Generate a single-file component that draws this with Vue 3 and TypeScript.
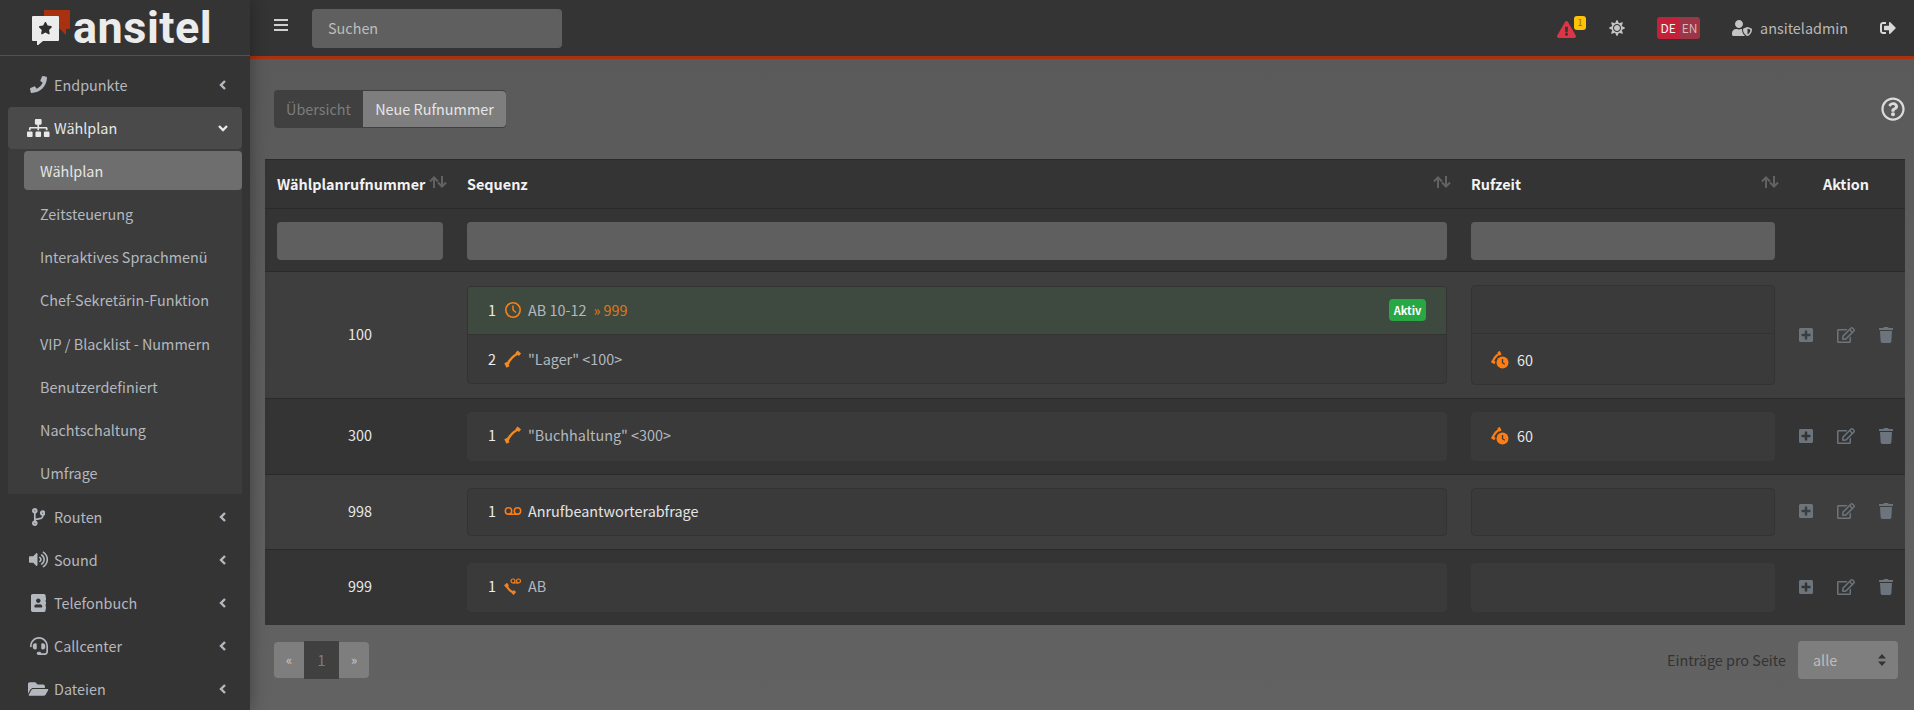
<template>
  <div class="page">
    <aside class="sidebar">
      <div class="brand">
        <svg class="brand-icon" viewBox="0 0 38 35" width="38" height="35">
          <path d="M12 0h25a1 1 0 0 1 1 1v17a1 1 0 0 1-1 1h-3v6l-6-6h-1V6H12z" fill="#a8320f" />
          <path d="M1 6h25a1 1 0 0 1 1 1v23a1 1 0 0 1-1 1H11l-6 5v-5H1a1 1 0 0 1-1-1V7a1 1 0 0 1 1-1z" fill="#ececec" />
          <path :d="icons.star.d" transform="translate(6.500 12) scale(.024)" fill="#2e2e2e" />
        </svg>
        <span class="brand-name">ansitel</span>
      </div>
      <nav class="menu">
        <template v-for="item in menu" :key="item.label">
          <a class="menu-item" :class="{ open: item.children }">
            <span class="menu-icon">
              <svg :viewBox="`0 0 ${icons[item.icon].w} 512`" :height="item.size" fill="currentColor"><path :d="icons[item.icon].d" /></svg>
            </span>
            <span class="menu-label">{{ item.label }}</span>
            <svg class="chevron" viewBox="0 0 10 10" width="10" height="10">
              <path :d="item.children ? 'M1 3l4 4 4-4' : 'M7 1L3 5l4 4'" fill="none" stroke="currentColor" stroke-width="2.4" />
            </svg>
          </a>
          <div v-if="item.children" class="submenu">
            <a v-for="(child, i) in item.children" :key="child" class="submenu-item" :class="{ active: i === 0 }">{{ child }}</a>
          </div>
        </template>
      </nav>
    </aside>

    <div class="main">
      <header class="topbar">
        <svg class="burger" viewBox="0 0 14 12" width="14" height="12"><path d="M0 0h14v2H0zM0 5h14v2H0zM0 10h14v2H0z" fill="#d0d0d0" /></svg>
        <input class="search" placeholder="Suchen" />
        <div class="top-right">
          <span class="alert">
            <svg viewBox="0 0 576 512" width="19" height="17" fill="#dc3545"><path :d="icons.warning.d" /></svg>
            <span class="alert-badge">1</span>
          </span>
          <svg class="sun" viewBox="0 0 512 512" width="16" height="16" fill="#c4c4c4"><path :d="icons.sun.d" /></svg>
          <span class="lang"><span class="lang-on">DE</span><span class="lang-off">EN</span></span>
          <svg class="user-icon" viewBox="0 0 640 512" width="20" height="16" fill="#c4c4c4"><path :d="icons.user.d" /></svg>
          <span class="username">ansiteladmin</span>
          <svg class="logout" viewBox="0 0 512 512" width="16" height="16" fill="#d8d8d8"><path :d="icons.logout.d" /></svg>
        </div>
      </header>

      <main class="content">
        <div class="tabs-row">
          <div class="tabs">
            <span class="tab">Übersicht</span>
            <span class="tab tab-active">Neue Rufnummer</span>
          </div>
          <svg viewBox="0 0 512 512" width="24" height="24" fill="#dcdcdc"><path :d="icons.help.d" /></svg>
        </div>

        <table class="plan">
          <colgroup>
            <col style="width: 190px" />
            <col />
            <col style="width: 328px" />
            <col style="width: 118px" />
          </colgroup>
          <thead>
            <tr class="head">
              <th v-for="h in ['Wählplanrufnummer', 'Sequenz', 'Rufzeit']" :key="h">
                <div class="th-inner">
                  <span>{{ h }}</span>
                  <svg viewBox="0 0 18 12" width="18" height="12" fill="none" stroke="#626262" stroke-width="2">
                    <path d="M5 12V2M1 5.500L5 1.500l4 4M13 0v10M9 6.500l4 4 4-4" />
                  </svg>
                </div>
              </th>
              <th class="th-action">Aktion</th>
            </tr>
            <tr class="filters">
              <td v-for="n in 3" :key="n"><input class="filter" /></td>
              <td></td>
            </tr>
          </thead>
          <tbody>
            <tr v-for="(row, r) in rows" :key="row.number" class="row" :class="{ odd: r % 2 === 0 }">
              <td class="number">{{ row.number }}</td>
              <td>
                <div class="box">
                  <div v-for="(s, i) in row.steps" :key="i" class="step" :class="{ green: s.active }">
                    <span class="step-no">{{ i + 1 }}</span>
                    <svg class="step-icon" viewBox="0 0 18 18" width="18" height="18" fill="none" stroke="#fd7e14">
                      <template v-if="s.kind === 'time'">
                        <circle cx="9" cy="9" r="7.200" stroke-width="1.600" />
                        <path d="M9 4.500V9l3 2.500" stroke-width="1.500" />
                      </template>
                      <template v-else-if="s.kind === 'phone'">
                        <path d="M3.500 14.500Q6 8 13.500 3.500" stroke="#f08a24" stroke-width="2.600" />
                        <path d="M1.800 12.500l2.200 4.500M12.500 1.800l3.500 3" stroke="#f08a24" stroke-width="3.400" />
                      </template>
                      <template v-else-if="s.kind === 'mail'">
                        <circle cx="4.500" cy="9" r="3.200" stroke-width="1.500" />
                        <circle cx="13.500" cy="9" r="3.200" stroke-width="1.500" />
                        <path d="M4.500 12.200h9" stroke-width="1.500" />
                      </template>
                      <template v-else>
                        <path d="M2.500 8.500c1.500 3.500 4 6 7.500 7" stroke-width="2.400" />
                        <path d="M1 9.500l3-2.500M8.500 17l2.500-3" stroke-width="3" />
                        <circle cx="9" cy="4" r="2" stroke-width="1.200" />
                        <circle cx="14.500" cy="4" r="2" stroke-width="1.200" />
                        <path d="M9 6h5.500" stroke-width="1.200" />
                      </template>
                    </svg>
                    <span class="step-text" :class="{ bright: s.kind === 'mail' }">{{ s.text }}</span>
                    <span v-if="s.target" class="step-target">» {{ s.target }}</span>
                    <span v-if="s.active" class="badge">Aktiv</span>
                  </div>
                </div>
              </td>
              <td>
                <div class="box">
                  <div v-for="(t, i) in row.times" :key="i" class="step time">
                    <template v-if="t">
                      <svg class="ring-icon" viewBox="0 0 18 18" width="18" height="18">
                        <path d="M2 10C3.500 6.500 5.500 4 9 2.500" fill="none" stroke="#fd7e14" stroke-width="2.200" />
                        <path d="M.5 10l3.500 2M7.500 .5l2 3.500" fill="none" stroke="#fd7e14" stroke-width="2.600" />
                        <circle cx="11.500" cy="11.500" r="6" fill="#fd7e14" />
                        <path d="M11.500 8v3.700l2.300 1.500" fill="none" stroke="#3a3a3a" stroke-width="1.300" />
                      </svg>
                      <span>{{ t }}</span>
                    </template>
                  </div>
                </div>
              </td>
              <td>
                <div class="actions">
                  <svg viewBox="0 0 448 512" width="14" height="16" fill="#6c757d"><path :d="icons.plus.d" /></svg>
                  <svg viewBox="0 0 576 512" width="18" height="16" fill="#6c757d"><path :d="icons.edit.d" /></svg>
                  <svg viewBox="0 0 448 512" width="14" height="16" fill="#6c757d"><path :d="icons.trash.d" /></svg>
                </div>
              </td>
            </tr>
          </tbody>
        </table>

        <div class="table-foot">
          <div class="pager">
            <span class="pg">«</span>
            <span class="pg pg-current">1</span>
            <span class="pg">»</span>
          </div>
          <div class="per-page">
            <label>Einträge pro Seite</label>
            <div class="select-wrap">
              <select class="select"><option>alle</option></select>
              <svg viewBox="0 0 8 12" width="8" height="12" fill="#333"><path d="M4 0l4 4.500H0zM4 12L0 7.500h8z" /></svg>
            </div>
          </div>
        </div>
      </main>
    </div>
  </div>
</template>

<script setup lang="ts">
interface Step {
  kind: 'time' | 'phone' | 'mail' | 'phonemail'
  text: string
  target?: string
  active?: boolean
}

// FontAwesome style icon paths, w = viewBox width
const icons: Record<string, { w: number; d: string }> = {
  phone: { w: 512, d: 'M493.4 24.6l-104-24c-11.300-2.600-22.900 3.300-27.500 13.900l-48 112c-4.200 9.800-1.400 21.300 6.900 28l60.600 49.600c-36 76.700-98.900 140.500-177.200 177.200l-49.600-60.600c-6.800-8.300-18.200-11.100-28-6.900l-112 48C3.900 366.500-2 378.100.6 389.400l24 104C27.100 504.200 36.700 512 48 512c256.100 0 464-207.500 464-464 0-11.200-7.700-20.900-18.600-23.400z' },
  sitemap: { w: 640, d: 'M128 352H32c-17.67 0-32 14.33-32 32v96c0 17.67 14.33 32 32 32h96c17.67 0 32-14.33 32-32v-96c0-17.67-14.33-32-32-32zm-24-80h192v48h48v-48h192v48h48v-57.59c0-21.17-17.23-38.41-38.41-38.41H344v-64h40c17.67 0 32-14.33 32-32V32c0-17.67-14.33-32-32-32H256c-17.67 0-32 14.33-32 32v96c0 17.67 14.33 32 32 32h40v64H94.41C73.23 224 56 241.23 56 262.41V320h48v-48zm264 80h-96c-17.67 0-32 14.33-32 32v96c0 17.67 14.33 32 32 32h96c17.67 0 32-14.33 32-32v-96c0-17.67-14.33-32-32-32zm240 0h-96c-17.67 0-32 14.33-32 32v96c0 17.67 14.33 32 32 32h96c17.67 0 32-14.33 32-32v-96c0-17.67-14.33-32-32-32z' },
  branch: { w: 384, d: 'M384 144c0-44.2-35.8-80-80-80s-80 35.8-80 80c0 36.4 24.3 67.1 57.5 76.8-.6 16.1-4.2 28.5-11 36.9-15.4 19.2-49.3 22.4-85.2 25.7-28.2 2.6-57.4 5.4-81.3 16.9v-144c32.5-10.2 56-40.5 56-76.3 0-44.2-35.8-80-80-80S0 35.8 0 80c0 35.8 23.5 66.1 56 76.3v199.3C23.5 365.9 0 396.2 0 432c0 44.2 35.8 80 80 80s80-35.8 80-80c0-34-21.2-63.1-51.2-74.6 3.1-5.2 7.8-9.8 14.9-13.4 16.2-8.2 40.4-10.4 66.1-12.8 42.2-3.9 90-8.4 118.2-43.4 14-17.4 21.1-39.8 21.6-67.9 31.6-10.8 54.4-40.7 54.4-75.9zM80 64c8.8 0 16 7.2 16 16s-7.2 16-16 16-16-7.2-16-16 7.2-16 16-16zm0 384c-8.8 0-16-7.2-16-16s7.2-16 16-16 16 7.2 16 16-7.2 16-16 16zm224-320c8.8 0 16 7.2 16 16s-7.2 16-16 16-16-7.2-16-16 7.2-16 16-16z' },
  volume: { w: 576, d: 'M215.03 71.05L126.06 160H24c-13.26 0-24 10.74-24 24v144c0 13.25 10.74 24 24 24h102.06l88.97 88.95c15.03 15.03 40.97 4.47 40.97-16.97V88.02c0-21.46-25.96-32-40.97-16.97zm233.32-51.08c-11.17-7.33-26.18-4.24-33.51 6.95-7.34 11.17-4.22 26.18 6.95 33.51 66.27 43.49 105.82 116.6 105.82 195.58 0 78.98-39.55 152.09-105.82 195.58-11.17 7.32-14.29 22.34-6.95 33.5 7.04 10.71 21.93 14.56 33.51 6.95C528.27 439.58 576 351.33 576 256S528.27 72.43 448.35 19.97zM480 256c0-63.53-32.06-121.94-85.77-156.24-11.19-7.14-26.03-3.82-33.12 7.46s-3.78 26.21 7.41 33.36C408.27 165.97 432 209.11 432 256s-23.73 90.03-63.48 115.42c-11.19 7.14-14.5 22.07-7.41 33.36 6.51 10.36 21.12 15.14 33.12 7.46C447.94 377.94 480 319.54 480 256zm-141.77-76.87c-11.58-6.33-26.19-2.16-32.61 9.45-6.39 11.61-2.16 26.2 9.45 32.61C327.98 228.28 336 241.63 336 256c0 14.38-8.02 27.72-20.92 34.81-11.61 6.41-15.84 21-9.45 32.61 6.43 11.66 21.05 15.8 32.61 9.45 28.23-15.55 45.77-45 45.77-76.88s-17.54-61.32-45.78-76.86z' },
  book: { w: 448, d: 'M436 160c6.6 0 12-5.4 12-12v-40c0-6.6-5.4-12-12-12h-20V48c0-26.5-21.5-48-48-48H48C21.5 0 0 21.5 0 48v416c0 26.5 21.5 48 48 48h320c26.5 0 48-21.5 48-48v-48h20c6.6 0 12-5.4 12-12v-40c0-6.6-5.4-12-12-12h-20v-64h20c6.6 0 12-5.4 12-12v-40c0-6.6-5.4-12-12-12h-20v-64h20zm-228-32c35.3 0 64 28.7 64 64s-28.7 64-64 64-64-28.7-64-64 28.7-64 64-64zm112 236.8c0 10.6-10 19.2-22.4 19.2H118.4C106 384 96 375.4 96 364.8v-19.2c0-31.8 30.1-57.6 67.2-57.6h5c12.3 5.1 25.7 8 39.8 8s27.6-2.9 39.8-8h5c37.1 0 67.2 25.8 67.2 57.6v19.2z' },
  headset: { w: 512, d: 'M192 208c0-17.67-14.33-32-32-32h-16c-35.35 0-64 28.65-64 64v48c0 35.35 28.65 64 64 64h16c17.67 0 32-14.33 32-32V208zm176 144c35.35 0 64-28.65 64-64v-48c0-35.35-28.65-64-64-64h-16c-17.67 0-32 14.33-32 32v112c0 17.67 14.33 32 32 32h16zM256 0C113.18 0 4.58 118.83 0 256v16c0 8.84 7.16 16 16 16h16c8.84 0 16-7.16 16-16v-16c0-114.69 93.31-208 208-208s208 93.31 208 208h-.12c.08 2.43.12 165.72.12 165.72 0 23.35-18.93 42.28-42.28 42.28H320c0-26.51-21.49-48-48-48h-32c-26.51 0-48 21.49-48 48s21.49 48 48 48h181.72c49.86 0 90.28-40.42 90.28-90.28V256C507.42 118.83 398.82 0 256 0z' },
  folder: { w: 576, d: 'M572.694 292.093L500.27 416.248A63.997 63.997 0 0 1 444.989 448H45.025c-18.523 0-30.064-20.093-20.731-36.093l72.424-124.155A64 64 0 0 1 152 256h399.964c18.523 0 30.064 20.093 20.73 36.093zM152 224h328v-48c0-26.51-21.49-48-48-48H272l-64-64H48C21.49 64 0 85.49 0 112v278.046l69.077-118.418C86.214 242.25 117.989 224 152 224z' },
  star: { w: 576, d: 'M259.3 17.8L194 150.2 47.9 171.5c-26.2 3.8-36.7 36.1-17.7 54.6l105.7 103-25 145.5c-4.5 26.3 23.2 46 46.4 33.7L288 439.6l130.7 68.7c23.2 12.2 50.9-7.4 46.4-33.7l-25-145.5 105.7-103c19-18.5 8.5-50.8-17.7-54.6L382 150.2 316.7 17.8c-11.7-23.6-45.6-23.9-57.4 0z' },
  warning: { w: 576, d: 'M569.517 440.013C587.975 472.007 564.806 512 527.94 512H48.054c-36.937 0-59.999-40.055-41.577-71.987L246.423 23.985c18.467-32.009 64.72-31.951 83.154 0l239.94 416.028zM288 354c-25.405 0-46 20.595-46 46s20.595 46 46 46 46-20.595 46-46-20.595-46-46-46zm-43.673-165.346l7.418 136c.347 6.364 5.609 11.346 11.982 11.346h48.546c6.373 0 11.635-4.982 11.982-11.346l7.418-136c.375-6.874-5.098-12.654-11.982-12.654h-63.383c-6.884 0-12.356 5.78-11.981 12.654z' },
  sun: { w: 512, d: 'M256 160c-52.9 0-96 43.1-96 96s43.1 96 96 96 96-43.1 96-96-43.1-96-96-96zm246.4 80.5l-94.7-47.3 33.5-100.4c4.5-13.6-8.4-26.5-21.9-21.9l-100.4 33.5-47.4-94.8c-6.4-12.8-24.6-12.8-31 0l-47.3 94.7L92.7 70.8c-13.6-4.5-26.5 8.4-21.9 21.9l33.5 100.4-94.7 47.4c-12.8 6.4-12.8 24.6 0 31l94.7 47.3-33.5 100.5c-4.5 13.6 8.4 26.5 21.9 21.9l100.4-33.5 47.3 94.7c6.4 12.8 24.6 12.8 31 0l47.3-94.7 100.4 33.5c13.6 4.5 26.5-8.4 21.9-21.9l-33.5-100.4 94.7-47.3c13-6.5 13-24.7.2-31.1zm-155.9 106c-49.9 49.9-131.1 49.9-181 0-49.9-49.9-49.9-131.1 0-181 49.9-49.9 131.1-49.9 181 0 49.9 49.9 49.9 131.1 0 181z' },
  user: { w: 640, d: 'M622.3 271.1l-115.2-45c-4.1-1.6-12.6-3.7-22.2 0l-115.2 45c-10.7 4.2-17.7 14-17.7 24.9 0 111.6 68.7 188.8 132.9 213.9 9.6 3.7 18 1.6 22.2 0C558.4 489.9 640 420.5 640 296c0-10.9-7-20.7-17.7-24.9zM496 462.4V273.3l95.5 37.3c-5.6 87.1-60.9 135.4-95.5 151.8zM224 256c70.7 0 128-57.3 128-128S294.7 0 224 0 96 57.3 96 128s57.3 128 128 128zm96 40c0-2.5.8-4.8 1.1-7.2-2.5-.1-4.9-.8-7.5-.8h-16.7c-22.2 10.2-46.9 16-72.9 16s-50.6-5.8-72.9-16h-16.7C60.2 288 0 348.2 0 422.4V464c0 26.5 21.5 48 48 48h352c6.8 0 13.3-1.5 19.2-4-54-42.9-99.2-116.7-99.2-212z' },
  logout: { w: 512, d: 'M497 273L329 441c-15 15-41 4.500-41-17v-96H152c-13.3 0-24-10.700-24-24v-96c0-13.300 10.700-24 24-24h136V88c0-21.400 25.900-32 41-17l168 168c9.300 9.400 9.300 24.600 0 34zM192 436v-40c0-6.600-5.400-12-12-12H96c-17.700 0-32-14.300-32-32V160c0-17.700 14.300-32 32-32h84c6.600 0 12-5.400 12-12V76c0-6.600-5.400-12-12-12H96c-53 0-96 43-96 96v192c0 53 43 96 96 96h84c6.600 0 12-5.400 12-12z' },
  help: { w: 512, d: 'M256 8C119.043 8 8 119.083 8 256c0 136.997 111.043 248 248 248s248-111.003 248-248C504 119.083 392.957 8 256 8zm0 448c-110.532 0-200-89.431-200-200 0-110.495 89.472-200 200-200 110.491 0 200 89.471 200 200 0 110.53-89.431 200-200 200zm107.244-255.2c0 67.052-72.421 68.084-72.421 92.863V300c0 6.627-5.373 12-12 12h-45.647c-6.627 0-12-5.373-12-12v-8.659c0-35.745 27.1-50.034 47.579-61.516 17.561-9.845 28.324-16.541 28.324-29.579 0-17.246-21.999-28.693-39.784-28.693-23.189 0-33.894 10.977-48.942 29.969-4.057 5.12-11.46 6.071-16.666 2.124l-27.824-21.098c-5.107-3.872-6.251-11.066-2.644-16.363C184.846 131.491 214.94 112 261.794 112c49.071 0 101.45 38.304 101.45 88.8zM298 368c0 23.159-18.841 42-42 42s-42-18.841-42-42 18.841-42 42-42 42 18.841 42 42z' },
  plus: { w: 448, d: 'M400 32H48C21.5 32 0 53.5 0 80v352c0 26.5 21.5 48 48 48h352c26.5 0 48-21.5 48-48V80c0-26.5-21.5-48-48-48zm-32 252c0 6.6-5.4 12-12 12h-92v92c0 6.6-5.4 12-12 12h-56c-6.6 0-12-5.4-12-12v-92H92c-6.6 0-12-5.4-12-12v-56c0-6.6 5.4-12 12-12h92v-92c0-6.6 5.4-12 12-12h56c6.6 0 12 5.4 12 12v92h92c6.6 0 12 5.4 12 12v56z' },
  edit: { w: 576, d: 'M402.3 344.9l32-32c5-5 13.7-1.5 13.7 5.7V464c0 26.5-21.5 48-48 48H48c-26.5 0-48-21.5-48-48V112c0-26.5 21.5-48 48-48h273.5c7.1 0 10.7 8.6 5.7 13.7l-32 32c-1.5 1.5-3.5 2.3-5.7 2.3H48v352h352V350.5c0-2.1.8-4.1 2.3-5.6zm156.6-201.8L296.3 405.7l-90.4 10c-26.2 2.9-48.5-19.2-45.6-45.6l10-90.4L432.9 17.1c22.9-22.9 59.9-22.9 82.7 0l43.2 43.2c22.9 22.9 22.9 60 .1 82.8zM460.1 174L402 115.9 216.2 301.8l-7.3 65.3 65.3-7.3L460.1 174zm64.8-79.7l-43.2-43.2c-4.1-4.1-10.8-4.1-14.8 0L436 82l58.1 58.1 30.9-30.9c4-4.2 4-10.8-.1-14.9z' },
  trash: { w: 448, d: 'M432 32H312l-9.4-18.7A24 24 0 0 0 281.1 0H166.8a23.72 23.72 0 0 0-21.4 13.3L136 32H16A16 16 0 0 0 0 48v32a16 16 0 0 0 16 16h416a16 16 0 0 0 16-16V48a16 16 0 0 0-16-16zM53.2 467a48 48 0 0 0 47.9 45h245.8a48 48 0 0 0 47.9-45L416 128H32z' },
}

const menu: { label: string; icon: string; size: number; children?: string[] }[] = [
  { label: 'Endpunkte', icon: 'phone', size: 17 },
  {
    label: 'Wählplan',
    icon: 'sitemap',
    size: 18,
    children: [
      'Wählplan',
      'Zeitsteuerung',
      'Interaktives Sprachmenü',
      'Chef-Sekretärin-Funktion',
      'VIP / Blacklist - Nummern',
      'Benutzerdefiniert',
      'Nachtschaltung',
      'Umfrage',
    ],
  },
  { label: 'Routen', icon: 'branch', size: 18 },
  { label: 'Sound', icon: 'volume', size: 17 },
  { label: 'Telefonbuch', icon: 'book', size: 18 },
  { label: 'Callcenter', icon: 'headset', size: 18 },
  { label: 'Dateien', icon: 'folder', size: 18 },
]

const rows: { number: string; steps: Step[]; times: string[] }[] = [
  {
    number: '100',
    steps: [
      { kind: 'time', text: 'AB 10-12', target: '999', active: true },
      { kind: 'phone', text: '"Lager" <100>' },
    ],
    times: ['', '60'],
  },
  { number: '300', steps: [{ kind: 'phone', text: '"Buchhaltung" <300>' }], times: ['60'] },
  { number: '998', steps: [{ kind: 'mail', text: 'Anrufbeantworterabfrage' }], times: [''] },
  { number: '999', steps: [{ kind: 'phonemail', text: 'AB' }], times: [''] },
]
</script>

<style scoped>
.page {
  display: flex;
  height: 710px;
  overflow: hidden;
  font-family: "Noto Sans CJK SC", "Noto Sans", sans-serif;
  font-size: 14.4px;
  line-height: 22px;
  color: #e2e2e2;
  background: #5e5e5e;
}

/* sidebar */
.sidebar {
  width: 250px;
  flex: none;
  background: #343434;
  box-shadow: 0 0 16px rgba(0, 0, 0, 0.35);
  position: relative;
  z-index: 2;
}

.brand {
  height: 56px;
  box-sizing: border-box;
  border-bottom: 1px solid #4b545c;
  display: flex;
  align-items: center;
  padding-left: 32px;
}

.brand-icon {
  flex: none;
  margin-top: -1px;
}

.brand-name {
  font-family: Roboto, sans-serif;
  font-size: 45px;
  line-height: 44px;
  font-weight: 700;
  letter-spacing: 0.5px;
  color: #ececec;
  margin-left: 3px;
}

.menu {
  padding: 7px 8px 0;
}

.menu-item {
  display: flex;
  align-items: center;
  height: 43px;
  padding: 0 14px 0 19px;
  box-sizing: border-box;
  color: #b4b8bf;
  border-radius: 4px;
}

.menu-item.open {
  height: 42px;
  margin-top: 1px;
  background: #4a4a4a;
  color: #e8e8e8;
}

.menu-icon {
  width: 23px;
  display: flex;
  justify-content: center;
}

.menu-icon svg {
  display: block;
}

.menu-label {
  flex: 1;
  margin-left: 4px;
}

.chevron {
  flex: none;
}

.submenu {
  background: #3c3c3c;
  padding: 2px 0 0 16px;
  height: 345px;
  margin-bottom: 1px;
  box-sizing: border-box;
}

.submenu-item {
  display: flex;
  align-items: center;
  height: 43.300px;
  padding-left: 16px;
  color: #b4b8bf;
  border-radius: 4px;
  box-sizing: border-box;
}

.submenu-item.active {
  height: 39px;
  margin-bottom: 2px;
  background: #6e6e6e;
  color: #e6e6e6;
}

/* top bar */
.main {
  flex: 1;
  min-width: 0;
  display: flex;
  flex-direction: column;
}

.topbar {
  height: 59px;
  box-sizing: border-box;
  flex: none;
  background: #343434;
  border-bottom: 3px solid #a8320f;
  display: flex;
  align-items: center;
  padding: 0 18px 0 24px;
}

.burger {
  margin-top: -6px;
}

.search {
  width: 250px;
  height: 39px;
  margin-left: 24px;
  box-sizing: border-box;
  border: none;
  border-radius: 4px;
  background: #5f5f5f;
  padding: 0 16px 2px;
  font: inherit;
  color: #ddd;
  outline: none;
}

.search::placeholder {
  color: #bdbdbd;
}

.top-right {
  margin-left: auto;
  display: flex;
  align-items: center;
}

.alert {
  position: relative;
  display: flex;
  margin-top: 2px;
}

.alert-badge {
  position: absolute;
  left: 17px;
  top: -5px;
  width: 12px;
  height: 14px;
  border-radius: 3px;
  background: #ffc107;
  color: #8a6a10;
  font-size: 9px;
  line-height: 14px;
  text-align: center;
}

.sun {
  margin-left: 33px;
}

.lang {
  margin-left: 32px;
  display: flex;
  height: 22px;
  border-radius: 3px;
  overflow: hidden;
  font-size: 12px;
  line-height: 22px;
}

.lang-on {
  width: 22px;
  text-align: center;
  background: #c4203a;
  color: #f4f4f4;
}

.lang-off {
  width: 21px;
  text-align: center;
  background: #9c3545;
  color: #d6b8bd;
}

.user-icon {
  margin-left: 32px;
}

.username {
  margin-left: 8px;
  color: #b8b8b8;
}

.logout {
  margin-left: 32px;
}

/* content */
.content {
  flex: 1;
  padding: 31px 9px 0 15px;
  background: linear-gradient(#5a5a5a, #626262);
}

.tabs-row {
  display: flex;
  justify-content: space-between;
  align-items: flex-start;
  padding-left: 9px;
  height: 69px;
}

.tabs-row svg {
  margin-top: 7px;
}

.tabs {
  display: flex;
  height: 38px;
  border-radius: 4px;
  overflow: hidden;
  background: #404040;
}

.tab {
  width: 89px;
  text-align: center;
  line-height: 38px;
  color: #7c7c7c;
  white-space: nowrap;
}

.tab-active {
  width: 143px;
  height: 36px;
  margin-top: 1px;
  line-height: 36px;
  border-radius: 0 4px 4px 0;
  background: #7e7e7e;
  color: #e6e6e6;
}

.plan {
  width: 1640px;
  table-layout: fixed;
  border-collapse: collapse;
  background: #343434;
}

.plan td,
.plan th {
  padding: 0 12px;
}

.head {
  height: 49px;
  border-top: 1px solid #2a2a2a;
}

.head th {
  text-align: left;
  font-weight: 700;
  color: #f2f2f2;
  border-bottom: 1px solid #2a2a2a;
}

.th-inner {
  display: flex;
  justify-content: space-between;
  align-items: center;
}

.th-inner svg {
  margin: -4px -4px 0 0;
  flex: none;
}

.head .th-action {
  text-align: center;
}

.filters {
  height: 63px;
}

.plan .filters td {
  padding-top: 2px;
}

.filter {
  display: block;
  width: 100%;
  height: 38px;
  box-sizing: border-box;
  border: none;
  border-radius: 4px;
  background: #5f5f5f;
  outline: none;
}

.row {
  border-top: 1px solid #2a2a2a;
}

.row td {
  padding-top: 13px;
  padding-bottom: 13px;
}

.row.odd {
  background: #3e3e3e;
}

.row td.number {
  padding-bottom: 15px;
  text-align: center;
  color: #e8e8e8;
}

.box {
  border: 1px solid #333;
  border-radius: 4px;
  background: #3a3a3a;
  overflow: hidden;
}

.row:not(.odd) .box {
  border-color: #3a3a3a;
}

.step {
  display: flex;
  align-items: center;
  height: 46.500px;
  padding: 0 16px 2px 20px;
  box-sizing: border-box;
}

.step:not(:last-child) {
  height: 47px;
}

.step + .step {
  height: 49px;
  padding-bottom: 0;
  border-top: 1px solid #333;
}

.green {
  background: #3e4a3f;
}

.step-no {
  width: 9px;
  color: #eee;
}

.step-icon {
  margin-left: 7px;
  flex: none;
}

.step-text {
  margin-left: 6px;
  color: #b4b8bf;
}

.step-text.bright {
  color: #e4e4e4;
}

.step-target {
  margin-left: 7px;
  color: #e0761a;
}

.badge {
  margin-left: auto;
  margin-right: 4px;
  width: 37px;
  height: 22px;
  border-radius: 4px;
  background: #28a745;
  color: #fff;
  font-size: 11px;
  font-weight: 700;
  line-height: 22px;
  text-align: center;
}

.step.time {
  padding-left: 19px;
  padding-bottom: 0;
  color: #e8e8e8;
}

.step.time + .step.time {
  height: 51px;
  padding-top: 1px;
}

.ring-icon {
  margin-right: 8px;
}

.actions {
  display: flex;
  justify-content: space-between;
  align-items: center;
  margin-top: -1px;
}

.actions svg {
  display: block;
}

.table-foot {
  display: flex;
  justify-content: space-between;
  align-items: center;
  padding: 16px 7px 0 9px;
}

.pager {
  display: flex;
  height: 36px;
  border-radius: 4px;
  background: #7e7e7e;
}

.pg {
  width: 30px;
  text-align: center;
  line-height: 36px;
  font-size: 13px;
  color: #c8c8c8;
}

.pg-current {
  width: 35px;
  height: 38px;
  margin-top: -1px;
  line-height: 38px;
  background: #404040;
  color: #7c7c7c;
  font-size: 15px;
}

.per-page {
  display: flex;
  align-items: center;
  gap: 12px;
}

.per-page label {
  color: #333;
}

.select-wrap {
  position: relative;
  width: 100px;
  height: 38px;
}

.select-wrap svg {
  position: absolute;
  right: 12px;
  top: 13px;
}

.select {
  appearance: none;
  width: 100%;
  height: 100%;
  box-sizing: border-box;
  border: none;
  border-radius: 4px;
  background: #7e7e7e;
  padding: 0 15px;
  font: inherit;
  color: #bdbdbd;
  outline: none;
}
</style>
